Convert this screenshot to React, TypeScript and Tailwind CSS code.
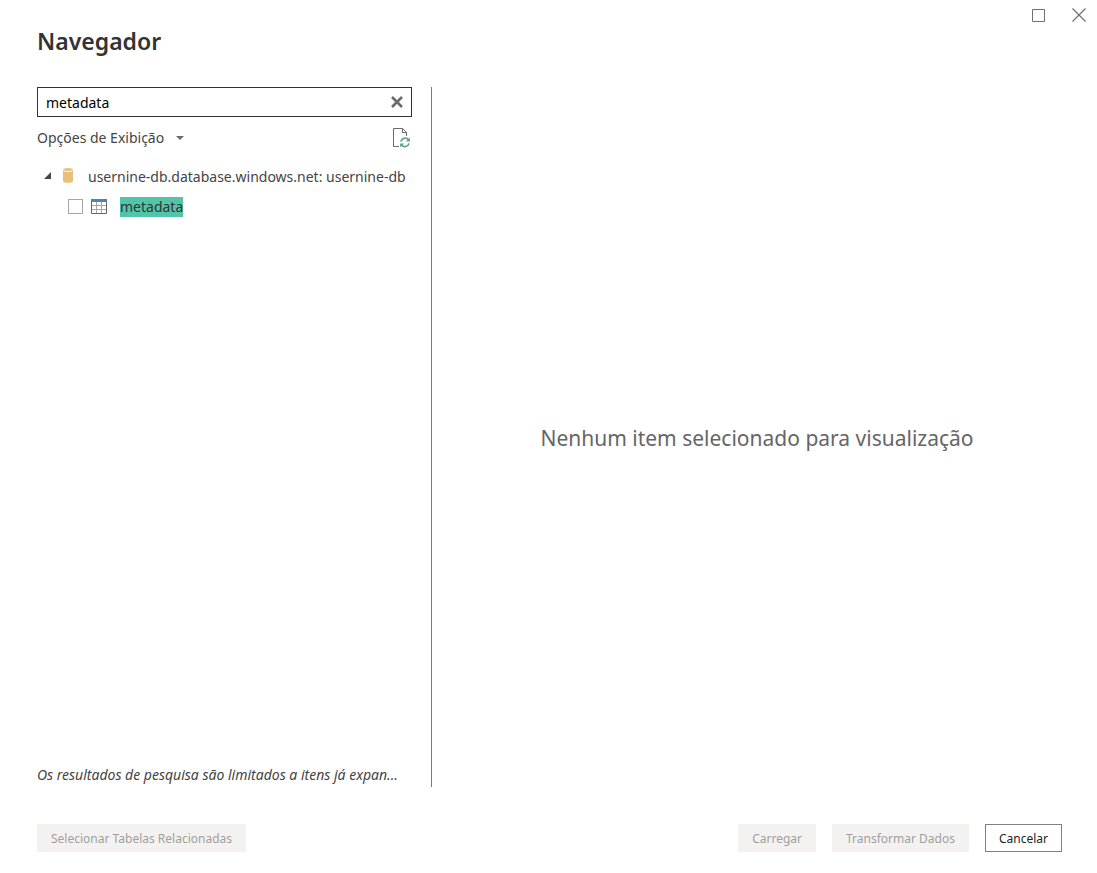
import { useState } from "react";

function CloseIcon() {
  return (
    <svg width="14" height="14" viewBox="0 0 14 14" fill="none" stroke="#707070" strokeWidth="1.2" aria-hidden="true">
      <path d="M0.5 0.5 13.5 13.5M13.5 0.5 0.5 13.5" />
    </svg>
  );
}

function MaximizeIcon() {
  return (
    <svg width="13" height="13" viewBox="0 0 13 13" fill="none" stroke="#707070" aria-hidden="true">
      <path d="M0.5 0.5h12v12h-12z" />
    </svg>
  );
}

function ClearIcon() {
  return (
    <svg width="12" height="12" viewBox="0 0 12 12" fill="none" stroke="#6a6a6a" strokeWidth="2.6" aria-hidden="true">
      <path d="M1 1 11 11M11 1 1 11" />
    </svg>
  );
}

function RefreshPageIcon() {
  return (
    <svg width="18" height="20" viewBox="0 0 18 20" fill="none" aria-hidden="true">
      <path d="M6 18.5H0.5V0.5H9.5L13.5 4.5V8" stroke="#6b6b6b" />
      <path d="M9.5 0.5V4.5H13.5" stroke="#6b6b6b" />
      <path d="M8 13.6A4.2 4.2 0 0 1 15.6 12M16 15.4A4.2 4.2 0 0 1 8.6 17" stroke="#5fa38a" strokeWidth="1.7" />
      <path d="M16.9 9.4V13.4H12.9zM7.1 19.4V15.4H11.1z" fill="#5fa38a" />
    </svg>
  );
}

function DatabaseIcon() {
  return (
    <svg width="10" height="15" viewBox="0 0 10 15" aria-hidden="true">
      <path d="M0 2V13.2C0 15.4 10 15.4 10 13.2V2z" fill="#e9c07c" />
      <ellipse cx="5" cy="2" rx="5" ry="2" fill="#e9c07c" />
      <path d="M0.5 2.2C1.5 4 8.5 4 9.5 2.2" fill="none" stroke="#fff" strokeWidth="1" />
    </svg>
  );
}

function TableIcon() {
  return (
    <svg width="16" height="15" viewBox="0 0 16 15" fill="none" aria-hidden="true">
      <path d="M5.5 3V14M10.5 3V14M1 6.5H15M1 10.5H15" stroke="#a6a6a6" />
      <path d="M0.5 2V14.5H15.5V2" stroke="#666" />
      <path d="M0 0H16V3H0z" fill="#4a84bd" />
    </svg>
  );
}

const actionButton = "h-7 border px-[13px] pt-[2px] text-[12px] leading-5";
const disabledButton = "border-[#f3f2f1] bg-[#f3f2f1] text-[#a19f9d]";

export default function App() {
  const [query, setQuery] = useState("metadata");
  const [checked, setChecked] = useState(false);

  return (
    <div className="flex min-h-screen flex-col bg-white pb-[21px] font-['Noto_Sans','Open_Sans',sans-serif] text-[14px] leading-5 text-[#444]">
      <header className="flex items-start justify-between pr-[11px] pl-[37px]">
        <h1 className="pt-[25px] text-[23px] leading-8 font-semibold text-[#333]">Navegador</h1>
        <div className="flex items-center gap-[27px] pt-2">
          <button type="button" aria-label="Maximizar"><MaximizeIcon /></button>
          <button type="button" aria-label="Fechar"><CloseIcon /></button>
        </div>
      </header>

      <main className="flex grow pt-[30px] pr-[35px] pl-[37px]">
        <section className="flex w-[395px] shrink-0 flex-col border-r border-[#7d7d7d] pr-[19px]">
          <div className="flex h-[30px] items-center border border-[#333] px-2">
            <input
              type="text"
              aria-label="Pesquisar"
              value={query}
              onChange={(e) => setQuery(e.target.value)}
              className="min-w-0 grow pt-[2px] text-black outline-none"
            />
            <button type="button" aria-label="Limpar" onClick={() => setQuery("")}><ClearIcon /></button>
          </div>
          <div className="flex items-center justify-between pt-[11px]">
            <button type="button" className="flex items-center gap-3 whitespace-nowrap">
              Opções de Exibição
              <svg width="8" height="4" viewBox="0 0 8 4" fill="#6b6b6b" aria-hidden="true"><path d="M0 0H8L4 4z" /></svg>
            </button>
            <button type="button" aria-label="Atualizar" className="pr-px"><RefreshPageIcon /></button>
          </div>

          <ul className="grow pt-[18px]">
            <li>
              <div className="flex h-[22px] items-center pl-[7px]">
                <div className="flex items-center gap-3 pb-1">
                  <button type="button" aria-label="Recolher">
                    <svg width="7" height="7" viewBox="0 0 7 7" fill="#444" aria-hidden="true"><path d="M7 0V7H0z" /></svg>
                  </button>
                  <DatabaseIcon />
                </div>
                <span className="pl-[15px] whitespace-nowrap">usernine-db.database.windows.net: usernine-db</span>
              </div>
              <ul className="pt-2">
                <li className="flex h-[22px] items-center pl-[31px]">
                  <div className="flex items-center gap-2 pb-[2px]">
                    <input
                      id="item-metadata"
                      type="checkbox"
                      checked={checked}
                      onChange={(e) => setChecked(e.target.checked)}
                      className="size-[15px] appearance-none border border-[#a6a6a6] bg-white checked:bg-[#444]"
                    />
                    <TableIcon />
                  </div>
                  <label htmlFor="item-metadata" className="ml-[13px] bg-[#52c5a9] text-[#333]">metadata</label>
                </li>
              </ul>
            </li>
          </ul>

          <p className="pb-[2px] whitespace-nowrap italic">Os resultados de pesquisa são limitados a itens já expan...</p>
        </section>

        <section className="flex grow items-center justify-center pl-5">
          <p className="pt-[2px] text-center text-[21px] leading-8 text-[#666]">Nenhum item selecionado para visualização</p>
        </section>
      </main>

      <footer className="flex items-center gap-4 pt-[37px] pr-[35px] pl-[37px]">
        <button type="button" disabled className={`${actionButton} ${disabledButton} mr-auto`}>Selecionar Tabelas Relacionadas</button>
        <button type="button" disabled className={`${actionButton} ${disabledButton}`}>Carregar</button>
        <button type="button" disabled className={`${actionButton} ${disabledButton}`}>Transformar Dados</button>
        <button type="button" className={`${actionButton} border-[#808080] bg-white text-[#252423]`}>Cancelar</button>
      </footer>
    </div>
  );
}
